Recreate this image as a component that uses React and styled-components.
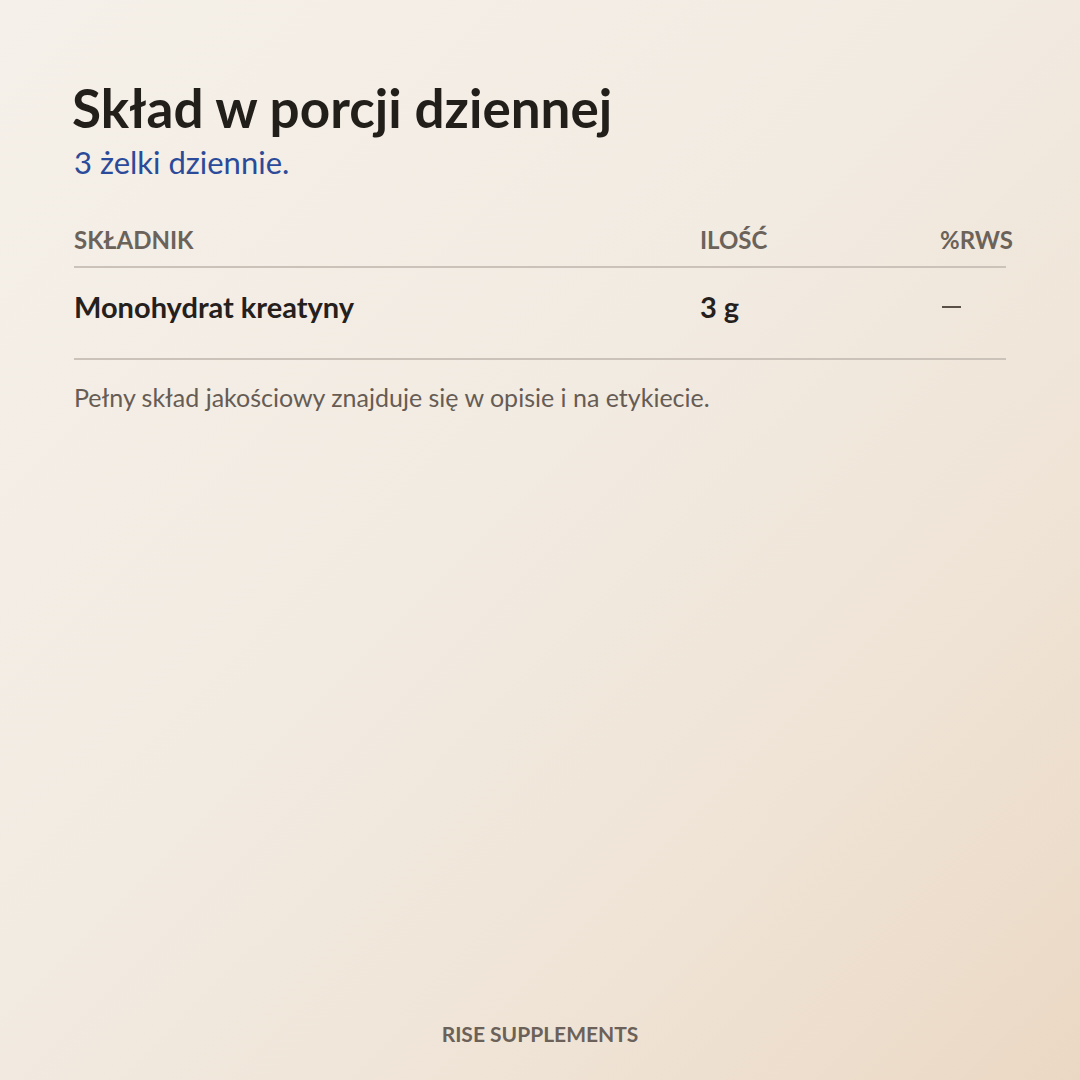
import React from "react";
import styled, { createGlobalStyle } from "styled-components";

const Global = createGlobalStyle`
  html, body { margin: 0; padding: 0; }
  body { font-family: Lato, "Noto Sans", sans-serif; }
`;

const Page = styled.div`
  width: 1080px;
  height: 1080px;
  box-sizing: border-box;
  padding: 78px 74px 0 74px;
  display: flex;
  flex-direction: column;
  background: linear-gradient(135deg, #f5f0e9 0%, #f2ebe2 45%, #efe3d5 75%, #ebd8c4 100%);
  overflow: hidden;
`;

const Title = styled.h1`
  margin: 0 0 0 -2px;
  font-family: Lato, sans-serif;
  font-weight: 700;
  font-size: 53px;
  line-height: 60px;
  color: #221e1a;
`;

const Subtitle = styled.p`
  margin: 2px 0 0 0;
  font-size: 31px;
  line-height: 44px;
  color: #2b4a99;
  font-weight: 400;
`;

const Table = styled.div`
  margin-top: 31px;
  width: 932px;
`;

const Row = styled.div`
  display: grid;
  grid-template-columns: 626px 240px 1fr;
  align-items: center;
  border-bottom: 2px solid #cbc3b9;
  height: ${(p) => p.$h}px;
  padding-bottom: ${(p) => p.$pb || 0}px;
  box-sizing: border-box;
  white-space: nowrap;
`;

const HeadCell = styled.div`
  font-size: 24px;
  font-weight: 700;
  color: #6b625a;
`;

const Cell = styled.div`
  font-size: 29px;
  font-weight: 700;
  color: #25201c;
`;

const Dash = styled.div`
  width: 19px;
  height: 2px;
  background: #5a5048;
  margin-left: 2px;
  margin-top: 2px;
`;

const Note = styled.p`
  margin: 22px 0 0 0;
  font-size: 25px;
  line-height: 30px;
  color: #665c54;
`;

const Spacer = styled.div`
  flex: 1;
`;

const Footer = styled.div`
  text-align: center;
  font-size: 21px;
  font-weight: 700;
  color: #6b6159;
  padding-bottom: 34px;
`;

export default function App() {
  return (
    <>
      <Global />
      <Page>
        <Title>Skład w porcji dziennej</Title>
        <Subtitle>3 żelki dziennie.</Subtitle>
        <Table>
          <Row $h={53} $pb={2}>
            <HeadCell>SKŁADNIK</HeadCell>
            <HeadCell>ILOŚĆ</HeadCell>
            <HeadCell>%RWS</HeadCell>
          </Row>
          <Row $h={92} $pb={14}>
            <Cell>Monohydrat kreatyny</Cell>
            <Cell>3 g</Cell>
            <Dash />
          </Row>
        </Table>
        <Note>Pełny skład jakościowy znajduje się w opisie i na etykiecie.</Note>
        <Spacer />
        <Footer>RISE SUPPLEMENTS</Footer>
      </Page>
    </>
  );
}
